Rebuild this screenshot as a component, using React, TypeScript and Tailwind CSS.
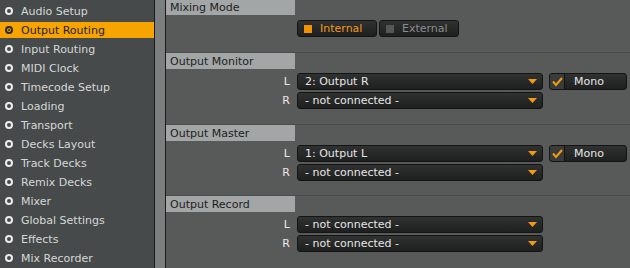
import React from "react";

const items = [
  "Audio Setup",
  "Output Routing",
  "Input Routing",
  "MIDI Clock",
  "Timecode Setup",
  "Loading",
  "Transport",
  "Decks Layout",
  "Track Decks",
  "Remix Decks",
  "Mixer",
  "Global Settings",
  "Effects",
  "Mix Recorder",
];

const font = { fontFamily: '"DejaVu Sans", "Liberation Sans", Arial, sans-serif' };

function Arrow() {
  return (
    <svg width="9" height="5" viewBox="0 0 9 5" className="shrink-0">
      <polygon points="0,0 9,0 4.5,5" fill="#f39a12" />
    </svg>
  );
}

function Dropdown({ text }: { text: string }) {
  return (
    <div className="flex h-[17px] w-[246px] items-center justify-between rounded-[3px] border border-[#141414] bg-gradient-to-b from-[#303232] to-[#1e1f1f] pl-[7px] pr-[5px] text-[11px] text-[#e6e6e6]">
      <span className="leading-none">{text}</span>
      <Arrow />
    </div>
  );
}

function Mono() {
  return (
    <div className="flex h-[17px] w-[78px] items-center rounded-[3px] border border-[#141414] bg-gradient-to-b from-[#303232] to-[#1e1f1f] text-[11px] text-[#e6e6e6]">
      <div className="flex h-full w-[15px] items-center justify-center rounded-l-[3px] border-r border-[#141414] bg-[#3a3c3c]">
        <svg width="11" height="10" viewBox="0 0 11 10">
          <polyline points="1,4.5 4,8 10,1" fill="none" stroke="#f39a12" strokeWidth="2" />
        </svg>
      </div>
      <span className="ml-[9px] leading-none">Mono</span>
    </div>
  );
}

function Row({ label, text, mono }: { label: string; text: string; mono?: boolean }) {
  return (
    <div className="flex h-[17px] items-center">
      <div className="w-[126px] pr-[2px] text-right text-[11px] leading-none text-[#e8e8e8]">{label}</div>
      <div className="ml-[5px]">
        <Dropdown text={text} />
      </div>
      {mono && (
        <div className="ml-[6px]">
          <Mono />
        </div>
      )}
    </div>
  );
}

function Header({ title }: { title: string }) {
  return (
    <div className="flex h-[16px] w-[129px] items-center bg-[#a2a6a6] pl-[4px] text-[11px] leading-none text-[#1f2121]">
      {title}
    </div>
  );
}

function OutSection({
  title,
  l,
  r,
  mono,
  h,
}: {
  title: string;
  l: string;
  r: string;
  mono?: boolean;
  h: string;
}) {
  return (
    <div className={`border-t border-[#4b4d4d] ${h}`}>
      <Header title={title} />
      <div className="mt-[4px] flex flex-col gap-[2px]">
        <Row label="L" text={l} mono={mono} />
        <Row label="R" text={r} />
      </div>
    </div>
  );
}

export default function App() {
  return (
    <div className="flex h-[268px] w-[630px] overflow-hidden bg-[#585959]" style={font}>
      <div className="h-full w-[154px] shrink-0 bg-[#464a4a] pt-[3px]">
        {items.map((it) => {
          const active = it === "Output Routing";
          return (
            <div
              key={it}
              className={`mb-[3px] flex h-[16px] items-center ${active ? "bg-[#f7a400]" : ""}`}
            >
              <div
                className={`ml-[5px] flex h-[8px] w-[8px] items-center justify-center rounded-full border-[2px] ${
                  active ? "border-[#2a2a2a] bg-[#f7a400]" : "border-[#ececec] bg-[#464a4a]"
                }`}
              >
                {active && <div className="h-[2px] w-[2px] rounded-full bg-[#2a2a2a]" />}
              </div>
              <span
                className={`ml-[8px] text-[11px] leading-none ${
                  active ? "text-[#1e1e1e]" : "text-[#d6d8d8]"
                }`}
              >
                {it}
              </span>
            </div>
          );
        })}
      </div>
      <div className="h-full w-[12px] shrink-0 border-x border-[#1a1a1a] bg-[#7b7f7f]" />
      <div className="flex h-full flex-1 flex-col">
        <div className="h-[52px]">
          <div className="flex h-[15px] w-[129px] items-center bg-[#a2a6a6] pl-[4px] text-[11px] leading-none text-[#1f2121]">
            Mixing Mode
          </div>
          <div className="ml-[131px] mt-[5px] flex gap-[2px]">
            <div className="flex h-[17px] w-[80px] items-center rounded-[3px] border border-[#141414] bg-gradient-to-b from-[#303232] to-[#1e1f1f]">
              <div className="ml-[6px] h-[8px] w-[8px] bg-[#f39200]" />
              <span className="ml-[8px] text-[11px] leading-none text-[#f39a12]">Internal</span>
            </div>
            <div className="flex h-[17px] w-[80px] items-center rounded-[3px] border border-[#141414] bg-gradient-to-b from-[#303232] to-[#1e1f1f]">
              <div className="ml-[6px] h-[8px] w-[8px] bg-[#555757]" />
              <span className="ml-[8px] text-[11px] leading-none text-[#8a8c8c]">External</span>
            </div>
          </div>
        </div>
        <OutSection title="Output Monitor" l="2: Output R" r="- not connected -" mono h="h-[72px]" />
        <OutSection title="Output Master" l="1: Output L" r="- not connected -" mono h="h-[71px]" />
        <OutSection title="Output Record" l="- not connected -" r="- not connected -" h="flex-1" />
      </div>
    </div>
  );
}
